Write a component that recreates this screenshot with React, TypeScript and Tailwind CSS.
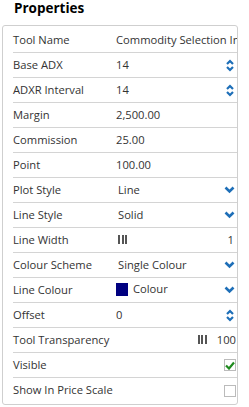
import React from "react";

const Spin = () => (
  <svg width="8" height="13" viewBox="0 0 8 13" className="shrink-0">
    <path d="M1 5 L4 2 L7 5" fill="none" stroke="#1e6fb8" strokeWidth="2.2" />
    <path d="M1 8 L4 11 L7 8" fill="none" stroke="#1e6fb8" strokeWidth="2.2" />
  </svg>
);

const Chev = () => (
  <svg width="11" height="8" viewBox="0 0 11 8" className="shrink-0">
    <path d="M1.5 1.5 L5.5 5.5 L9.5 1.5" fill="none" stroke="#1e6fb8" strokeWidth="2.6" />
  </svg>
);

const Bars = () => (
  <span className="flex gap-[1.5px] items-center h-[11px]">
    <span className="w-[2px] h-[9px] bg-[#555]" />
    <span className="w-[2px] h-[9px] bg-[#555]" />
    <span className="w-[2px] h-[9px] bg-[#555]" />
  </span>
);

type RowProps = { label: string; value?: React.ReactNode; right?: React.ReactNode };

const Row = ({ label, value, right }: RowProps) => (
  <div className="flex items-center h-[25px] border-b border-[#d4d4d4] last:border-b-0">
    <div className="w-[103px] shrink-0 whitespace-nowrap">{label}</div>
    <div className="flex-1 min-w-0 overflow-hidden whitespace-nowrap flex items-center">{value}</div>
    {right}
  </div>
);

export default function App() {
  return (
    <div
      className="w-[249px] h-[407px] bg-white text-[#333] text-[11.2px] relative"
      style={{ fontFamily: '"Open Sans", "Noto Sans", sans-serif' }}
    >
      <div className="pl-[14px] h-[25px] text-[13.5px] font-bold text-black leading-[17px]">Properties</div>
      <div className="mx-[2px] w-[236px] border border-[#cfcfcf] rounded-[3px] pl-[10px] pt-[2px] pb-[1px]">
        <Row label="Tool Name" value={<span>Commodity Selection Index</span>} />
        <Row label="Base ADX" value={<span>14</span>} right={<span className="pr-[3px] pl-1 flex"><Spin /></span>} />
        <Row label="ADXR Interval" value={<span>14</span>} right={<span className="pr-[3px] pl-1 flex"><Spin /></span>} />
        <Row label="Margin" value={<span>2,500.00</span>} />
        <Row label="Commission" value={<span>25.00</span>} />
        <Row label="Point" value={<span>100.00</span>} />
        <Row label="Plot Style" value={<span className="pl-[2px]">Line</span>} right={<span className="pr-[2px] pl-1 flex"><Chev /></span>} />
        <Row label="Line Style" value={<span className="pl-[2px]">Solid</span>} right={<span className="pr-[2px] pl-1 flex"><Chev /></span>} />
        <Row
          label="Line Width"
          value={
            <span className="pl-[2px] flex-1 flex items-center justify-between pr-[3px]">
              <Bars />
              <span>1</span>
            </span>
          }
        />
        <Row label="Colour Scheme" value={<span className="pl-[2px]">Single Colour</span>} right={<span className="pr-[2px] pl-1 flex"><Chev /></span>} />
        <Row
          label="Line Colour"
          value={
            <span className="flex items-center gap-[5px] -ml-[1px]">
              <span className="w-[13px] h-[13px] bg-[#000080] inline-block" />
              <span className="mb-[2px]">Colour</span>
            </span>
          }
          right={<span className="pr-[2px] pl-1 flex"><Chev /></span>}
        />
        <Row label="Offset" value={<span>0</span>} right={<span className="pr-[3px] pl-1 flex"><Spin /></span>} />
        <Row
          label="Tool Transparency"
          value={
            <span className="flex-1 flex items-center justify-end gap-[10px] pr-[1px]">
              <Bars />
              <span>100</span>
            </span>
          }
        />
        <Row
          label="Visible"
          value={<span />}
          right={
            <span className="mr-[1px] w-[12px] h-[12px] border border-[#bbb] flex items-center justify-center">
              <svg width="10" height="9" viewBox="0 0 10 9">
                <path d="M1 4.5 L4 7.5 L9 1.5" fill="none" stroke="#1f8a1f" strokeWidth="2.2" />
              </svg>
            </span>
          }
        />
        <Row
          label="Show In Price Scale"
          value={<span />}
          right={<span className="mr-[1px] w-[12px] h-[12px] border border-[#bbb] inline-block" />}
        />
      </div>
    </div>
  );
}
